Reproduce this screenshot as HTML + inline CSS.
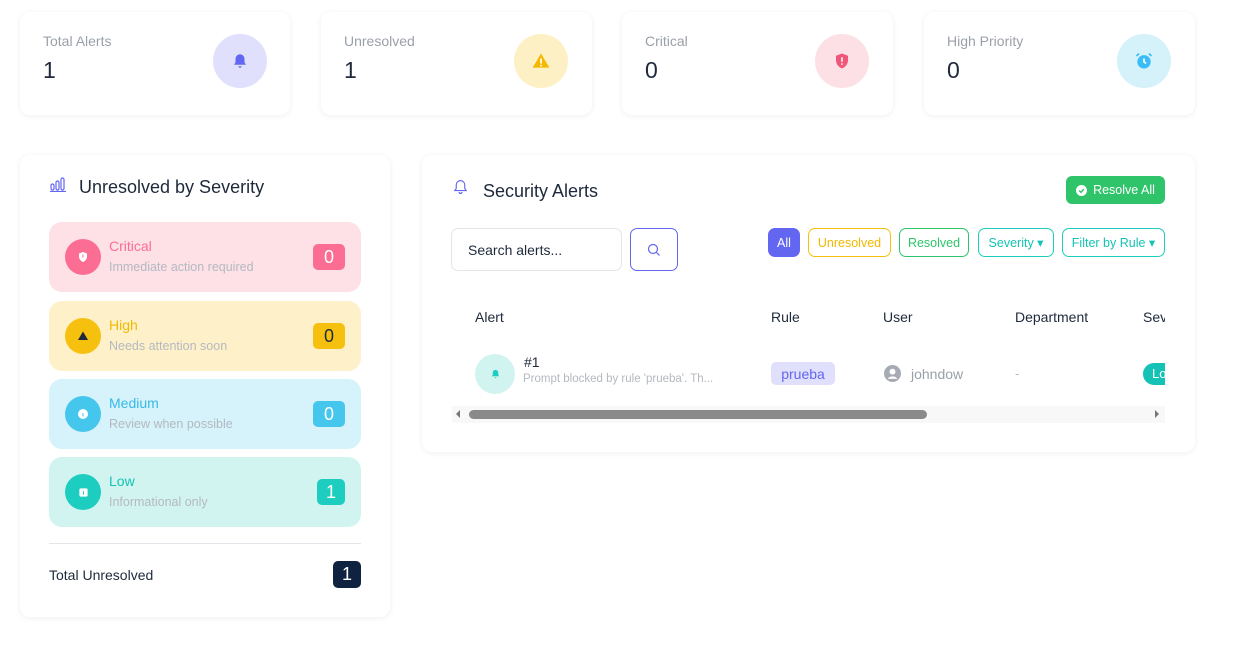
<!DOCTYPE html>
<html><head><meta charset="utf-8"><style>
*{box-sizing:border-box;margin:0;padding:0}
body{width:1233px;height:668px;background:#fff;font-family:"Liberation Sans",sans-serif;position:relative;overflow:hidden;color:#1e293b}
.card{position:absolute;background:#fff;border-radius:10px;box-shadow:0 1px 6px rgba(0,0,0,.07)}
.st .lbl{position:absolute;left:23px;top:21px;font-size:14px;color:#9aa0a8}
.st .val{position:absolute;left:23px;top:45px;font-size:23px;color:#1e293b}
.st .ic{position:absolute;left:193px;top:22px;width:54px;height:54px;border-radius:50%;display:flex;align-items:center;justify-content:center}
.row{position:absolute;left:29px;width:312px;height:70px;border-radius:13px}
.row .c{position:absolute;left:16px;top:17px;width:36px;height:36px;border-radius:50%;display:flex;align-items:center;justify-content:center}
.row .t{position:absolute;left:60px;top:16px;font-size:14px}
.row .s{position:absolute;left:60px;top:38px;font-size:12.5px;color:#b4b9c0}
.row .b{position:absolute;right:16px;top:22px;width:32px;height:26px;border-radius:5px;color:#fff;font-size:18px;display:flex;align-items:center;justify-content:center}
.pill{position:absolute;top:228px;height:29px;border-radius:7px;border:1px solid;font-size:12.5px;display:flex;align-items:center;justify-content:center}
.th{position:absolute;top:309px;font-size:14px;color:#1e293b}
</style></head><body>

<div class="card st" style="left:20px;top:12px;width:270px;height:103px"><div class="lbl">Total Alerts</div><div class="val">1</div><div class="ic" style="background:#e0e0fd"><svg width="18" height="18" viewBox="0 0 24 24"><path d="M12 3a6 6 0 0 0-6 6v5l-2 3h16l-2-3V9a6 6 0 0 0-6-6zM10 19a2 2 0 0 0 4 0z" fill="#6366f1"/></svg></div></div>
<div class="card st" style="left:321px;top:12px;width:271px;height:103px"><div class="lbl">Unresolved</div><div class="val">1</div><div class="ic" style="background:#fdf0c5"><svg width="20" height="20" viewBox="0 0 24 24"><path d="M12 3L2 20h20z" fill="#f5b800"/><rect x="11" y="9" width="2" height="6" fill="#fff"/><rect x="11" y="16.5" width="2" height="2" fill="#fff"/></svg></div></div>
<div class="card st" style="left:622px;top:12px;width:271px;height:103px"><div class="lbl">Critical</div><div class="val">0</div><div class="ic" style="background:#fde0e6"><svg width="18" height="18" viewBox="0 0 24 24"><path d="M12 2l8 3v6c0 5-3.5 9-8 11-4.5-2-8-6-8-11V5z" fill="#f0557a"/><rect x="11" y="7" width="2" height="6" fill="#fff"/><rect x="11" y="15" width="2" height="2" fill="#fff"/></svg></div></div>
<div class="card st" style="left:924px;top:12px;width:271px;height:103px"><div class="lbl">High Priority</div><div class="val">0</div><div class="ic" style="background:#d5f1fa"><svg width="20" height="20" viewBox="0 0 24 24"><circle cx="12" cy="13" r="8" fill="#38bdf8"/><path d="M12 9v4l2.5 2" stroke="#fff" stroke-width="2" fill="none"/><path d="M3 6l3-3M21 6l-3-3" stroke="#38bdf8" stroke-width="2"/></svg></div></div>

<div class="card" style="left:20px;top:155px;width:370px;height:462px">
 <svg style="position:absolute;left:30px;top:22px" width="16" height="15" viewBox="0 0 16 15"><g fill="none" stroke="#6366f1" stroke-width="1.2"><rect x="1" y="7" width="3" height="6" rx="1.5"/><rect x="6" y="4" width="3" height="9" rx="1.5"/><rect x="11" y="1" width="3" height="12" rx="1.5"/><path d="M0 14.5h16"/></g></svg>
 <div style="position:absolute;left:59px;top:22px;font-size:18px;color:#1e293b">Unresolved by Severity</div>
 <div class="row" style="top:67px;background:#fee0e7"><div class="c" style="background:#fb6d93"><svg width="12" height="12" viewBox="0 0 24 24"><path d="M12 2l8 3v6c0 5-3.5 9-8 11-4.5-2-8-6-8-11V5z" fill="#fff"/><rect x="11" y="7" width="2" height="6" fill="#fb6d93"/></svg></div><div class="t" style="color:#fb6d93">Critical</div><div class="s">Immediate action required</div><div class="b" style="background:#fb6d93">0</div></div>
 <div class="row" style="top:146px;background:#fef0c9"><div class="c" style="background:#f6c00e"><svg width="12" height="12" viewBox="0 0 24 24"><path d="M12 3L2 20h20z" fill="#1e293b"/></svg></div><div class="t" style="color:#f2b900">High</div><div class="s">Needs attention soon</div><div class="b" style="background:#f6c00e;color:#1e293b">0</div></div>
 <div class="row" style="top:224px;background:#d6f2fa"><div class="c" style="background:#45c6ec"><svg width="12" height="12" viewBox="0 0 24 24"><circle cx="12" cy="12" r="10" fill="#fff"/><rect x="11" y="10" width="2" height="7" fill="#45c6ec"/></svg></div><div class="t" style="color:#36b9e6">Medium</div><div class="s">Review when possible</div><div class="b" style="background:#45c6ec">0</div></div>
 <div class="row" style="top:302px;background:#d1f4f0"><div class="c" style="background:#1dcdbf"><svg width="11" height="11" viewBox="0 0 24 24"><rect x="3" y="3" width="18" height="18" rx="3" fill="#fff"/><rect x="11" y="9" width="2" height="8" fill="#1dcdbf"/></svg></div><div class="t" style="color:#14c3b5">Low</div><div class="s">Informational only</div><div class="b" style="background:#1dcdbf;width:28px">1</div></div>
 <div style="position:absolute;left:29px;top:388px;width:312px;border-top:1px solid #e2e5e9"></div>
 <div style="position:absolute;left:29px;top:412px;font-size:14px;color:#1e293b">Total Unresolved</div>
 <div style="position:absolute;left:313px;top:406px;width:28px;height:27px;border-radius:5px;background:#0f2240;color:#fff;font-size:18px;display:flex;align-items:center;justify-content:center">1</div>
</div>

<div class="card" style="left:422px;top:155px;width:773px;height:297px"></div>
<svg style="position:absolute;left:452px;top:178px" width="17" height="18" viewBox="0 0 24 24"><path d="M12 3a6 6 0 0 0-6 6v5l-2 3h16l-2-3V9a6 6 0 0 0-6-6zM10 19a2 2 0 0 0 4 0" fill="none" stroke="#6366f1" stroke-width="1.6"/></svg>
<div style="position:absolute;left:483px;top:181px;font-size:18px">Security Alerts</div>
<div style="position:absolute;left:1066px;top:176px;width:99px;height:28px;background:#2fc46a;border-radius:6px;color:#fff;font-size:12.5px;display:flex;align-items:center;justify-content:center;gap:6px"><svg width="11" height="11" viewBox="0 0 12 12"><circle cx="6" cy="6" r="6" fill="#fff"/><path d="M3.5 6l2 2 3-3.5" stroke="#2fc46a" stroke-width="1.5" fill="none"/></svg>Resolve All</div>
<div style="position:absolute;left:451px;top:228px;width:171px;height:43px;border:1px solid #e2e5ea;border-radius:7px;font-size:14px;color:#1e293b;padding:13px 0 0 16px">Search alerts...</div>
<div style="position:absolute;left:630px;top:228px;width:48px;height:43px;border:1px solid #6366f1;border-radius:7px;display:flex;align-items:center;justify-content:center"><svg width="14" height="14" viewBox="0 0 14 14"><circle cx="6" cy="6" r="4.5" fill="none" stroke="#6366f1" stroke-width="1.2"/><path d="M9.5 9.5l3 3" stroke="#6366f1" stroke-width="1.2"/></svg></div>
<div class="pill" style="left:768px;width:32px;background:#6366f1;border-color:#6366f1;color:#fff">All</div>
<div class="pill" style="left:808px;width:83px;border-color:#f6c00e;color:#f2b900">Unresolved</div>
<div class="pill" style="left:899px;width:70px;border-color:#2fc46a;color:#2fc46a">Resolved</div>
<div class="pill" style="left:978px;width:76px;border-color:#1dcdbf;color:#14c3b5">Severity ▾</div>
<div class="pill" style="left:1062px;width:103px;border-color:#1dcdbf;color:#14c3b5">Filter by Rule ▾</div>
<div class="th" style="left:475px">Alert</div><div class="th" style="left:771px">Rule</div><div class="th" style="left:883px">User</div><div class="th" style="left:1015px">Department</div>
<div style="position:absolute;left:1143px;top:309px;width:22px;overflow:hidden;font-size:14px">Severity</div>
<div style="position:absolute;left:475px;top:354px;width:40px;height:40px;border-radius:50%;background:#d1f4f0;display:flex;align-items:center;justify-content:center"><svg width="11" height="12" viewBox="0 0 24 24"><path d="M12 3a6 6 0 0 0-6 6v5l-2 3h16l-2-3V9a6 6 0 0 0-6-6zM10 19a2 2 0 0 0 4 0z" fill="#1dcdbf"/></svg></div>
<div style="position:absolute;left:524px;top:354px;font-size:14px">#1</div>
<div style="position:absolute;left:523px;top:373px;font-size:11.5px;color:#b4b9c0">Prompt blocked by rule 'prueba'. Th...</div>
<div style="position:absolute;left:771px;top:362px;width:64px;height:23px;border-radius:5px;background:#e0e0fd;color:#6366f1;font-size:14px;display:flex;align-items:center;justify-content:center">prueba</div>
<svg style="position:absolute;left:884px;top:365px" width="17" height="17" viewBox="0 0 16 16"><circle cx="8" cy="8" r="8" fill="#a6abb3"/><circle cx="8" cy="6.3" r="2.8" fill="#fff"/><path d="M3.5 13a5 4 0 0 1 9 0" fill="#fff"/></svg>
<div style="position:absolute;left:911px;top:366px;font-size:14px;color:#9aa0a8">johndow</div>
<div style="position:absolute;left:1015px;top:366px;font-size:13px;color:#b4b9c0">-</div>
<div style="position:absolute;left:1143px;top:363px;width:22px;height:22px;border-radius:11px 0 0 11px;background:#14c3b5;color:#fff;font-size:13px;overflow:hidden;padding:3px 0 0 9px">Lo</div>
<div style="position:absolute;left:452px;top:406px;width:713px;height:17px;background:#f8f8f8"></div>
<div style="position:absolute;left:456px;top:410px;width:0;height:0;border-top:4px solid transparent;border-bottom:4px solid transparent;border-right:4px solid #777"></div>
<div style="position:absolute;left:1155px;top:410px;width:0;height:0;border-top:4px solid transparent;border-bottom:4px solid transparent;border-left:4px solid #777"></div>
<div style="position:absolute;left:469px;top:410px;width:458px;height:9px;border-radius:5px;background:#8a8a8a"></div>
</body></html>
